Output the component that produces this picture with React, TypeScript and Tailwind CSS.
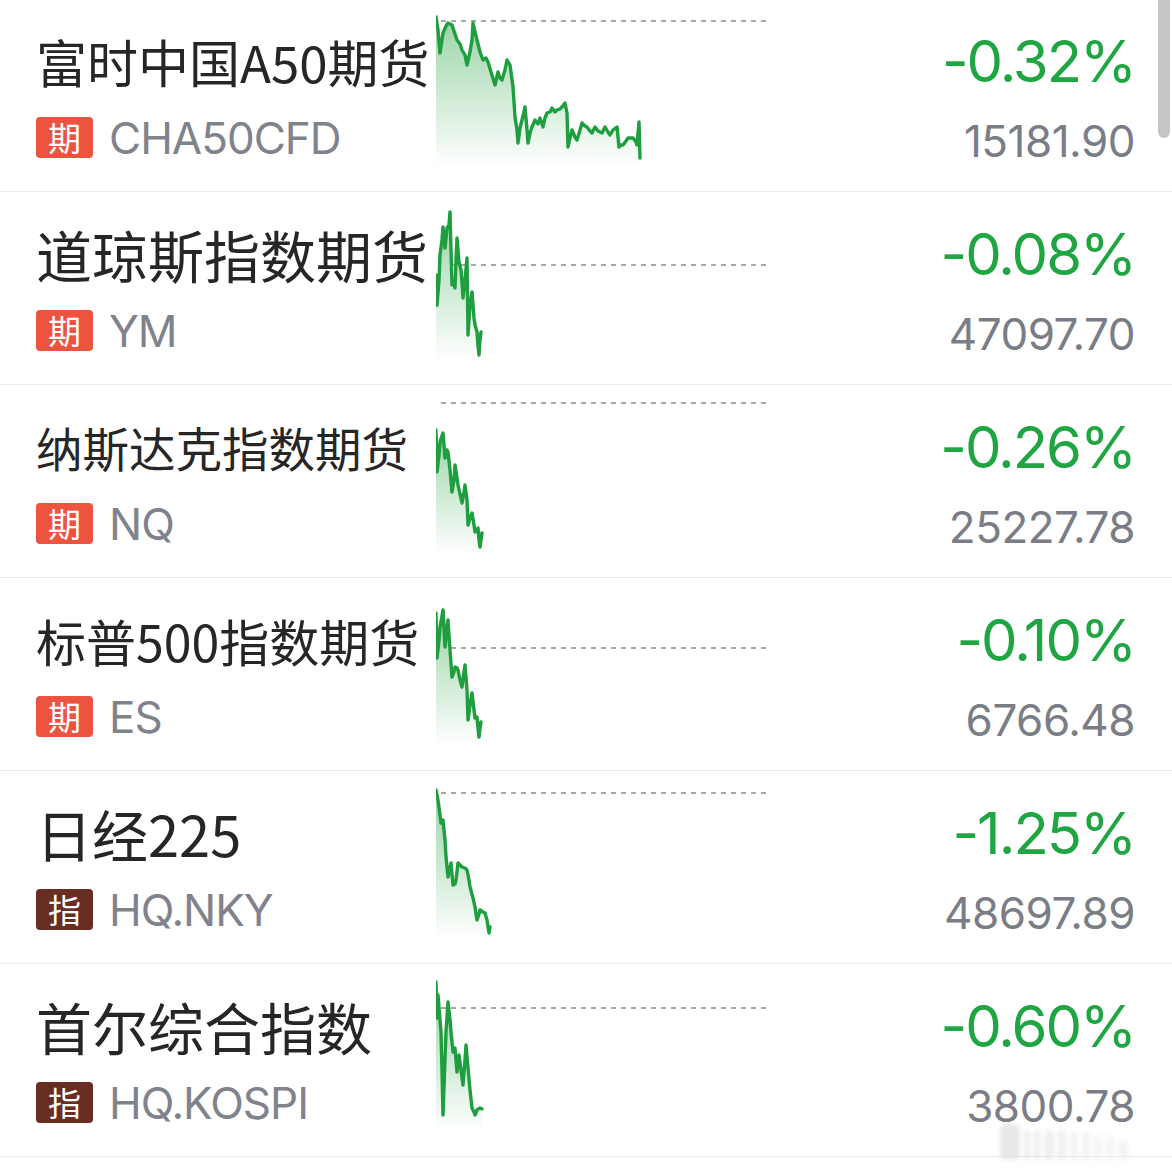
import React from "react";

type Row = {
  name: string;
  nameCls: string;
  badge: string;
  badgeCls: string;
  code: string;
  pct: string;
  price: string;
  dash: number;
  pts: number[][];
};

const rows: Row[] = [
  {
    name: "富时中国A50期货",
    nameCls: "text-[51px]",
    badge: "期",
    badgeCls: "bg-[#ec5440]",
    code: "CHA50CFD",
    pct: "-0.32%",
    price: "15181.90",
    dash: 21,
    pts: [[436,17],[438,30],[440,53],[443,33],[446,26],[448,23],[452,25],[455,34],[457,40],[460,44],[462,50],[465,55],[467,65],[470,52],[472,40],[473,23],[475,32],[477,40],[480,52],[483,60],[486,58],[488,62],[491,72],[495,85],[498,72],[500,78],[502,80],[505,70],[507,60],[510,65],[513,87],[515,117],[517,130],[518,143],[520,128],[522,120],[524,112],[525,107],[527,130],[528,143],[530,133],[532,127],[535,120],[538,124],[540,118],[543,127],[545,118],[547,113],[550,112],[552,108],[555,112],[557,110],[560,109],[562,107],[565,103],[567,113],[568,147],[570,138],[572,130],[575,137],[577,140],[580,130],[582,123],[585,126],[587,127],[590,131],[592,133],[595,127],[598,131],[602,133],[605,127],[608,132],[610,135],[613,130],[617,127],[619,147],[621,145],[623,145],[626,141],[628,138],[633,138],[636,142],[637,145],[639,122],[640,158]],
  },
  {
    name: "道琼斯指数期货",
    nameCls: "text-[56px]",
    badge: "期",
    badgeCls: "bg-[#ec5440]",
    code: "YM",
    pct: "-0.08%",
    price: "47097.70",
    dash: 265,
    pts: [[436,275],[437,305],[439,280],[440,255],[442,240],[443,227],[445,248],[447,228],[449,225],[450,212],[451,250],[452,285],[454,282],[455,288],[456,260],[457,238],[459,262],[461,270],[462,282],[463,298],[465,280],[467,258],[468,335],[470,305],[472,292],[474,318],[475,325],[477,332],[478,345],[479,355],[480,340],[481,332]],
  },
  {
    name: "纳斯达克指数期货",
    nameCls: "text-[46.5px]",
    badge: "期",
    badgeCls: "bg-[#ec5440]",
    code: "NQ",
    pct: "-0.26%",
    price: "25227.78",
    dash: 403,
    pts: [[436,430],[437,472],[439,455],[440,442],[443,433],[445,458],[447,450],[448,452],[450,470],[452,492],[454,480],[455,465],[457,478],[458,485],[460,494],[462,503],[464,492],[465,485],[467,500],[468,525],[470,518],[472,513],[474,525],[475,532],[477,530],[478,528],[479,540],[480,547],[481,540],[482,533]],
  },
  {
    name: "标普500指数期货",
    nameCls: "text-[50px]",
    badge: "期",
    badgeCls: "bg-[#ec5440]",
    code: "ES",
    pct: "-0.10%",
    price: "6766.48",
    dash: 648,
    pts: [[436,613],[437,658],[439,640],[440,627],[442,616],[443,610],[445,647],[447,628],[448,620],[450,650],[452,677],[454,672],[455,667],[457,668],[458,670],[460,680],[462,687],[464,672],[465,665],[467,690],[468,720],[470,705],[472,693],[474,710],[475,718],[477,717],[478,728],[479,737],[480,728],[481,722]],
  },
  {
    name: "日经225",
    nameCls: "text-[56px]",
    badge: "指",
    badgeCls: "bg-[#6a2d22]",
    code: "HQ.NKY",
    pct: "-1.25%",
    price: "48697.89",
    dash: 793,
    pts: [[436,790],[438,800],[440,815],[441,823],[443,820],[445,840],[446,857],[448,877],[450,868],[451,863],[453,885],[455,884],[456,880],[458,863],[460,865],[462,867],[465,868],[467,870],[469,880],[470,887],[473,898],[475,907],[477,920],[479,914],[480,910],[483,912],[485,913],[487,920],[489,933],[490,927]],
  },
  {
    name: "首尔综合指数",
    nameCls: "text-[56px]",
    badge: "指",
    badgeCls: "bg-[#6a2d22]",
    code: "HQ.KOSPI",
    pct: "-0.60%",
    price: "3800.78",
    dash: 1008,
    pts: [[436,982],[437,1018],[438,995],[440,1020],[441,1032],[442,1070],[443,1115],[445,1060],[446,1032],[448,1002],[450,1020],[451,1032],[453,1052],[455,1048],[457,1072],[459,1055],[461,1070],[462,1078],[463,1085],[465,1060],[466,1045],[468,1068],[470,1090],[472,1108],[474,1112],[475,1115],[477,1110],[478,1109],[480,1108],[482,1109]],
  },
];

function Chart({ row, top, idx }: { row: Row; top: number; idx: number }) {
  const P = row.pts.map(([x, y]) => [x - 436, y - top]);
  const bottom = 168;
  const line = P.map(([x, y], i) => `${i === 0 ? "M" : "L"}${x},${y}`).join(" ");
  const area = `${line} L${P[P.length - 1][0]},${bottom} L${P[0][0]},${bottom} Z`;
  const dy = row.dash - top;
  const gid = `g${idx}`;
  return (
    <svg width={330} height={192} className="shrink-0 block" viewBox="0 0 330 192">
      <defs>
        <linearGradient id={gid} x1="0" y1="0" x2="0" y2="1">
          <stop offset="0%" stopColor="#98d3a5" />
          <stop offset="100%" stopColor="#ffffff" />
        </linearGradient>
      </defs>
      <line x1={5} y1={dy} x2={330} y2={dy} stroke="#a9a9a9" strokeWidth={1.8} strokeDasharray="5 5" />
      <path d={area} fill={`url(#${gid})`} />
      <path d={line} fill="none" stroke="#1f9e3f" strokeWidth={3.4} strokeLinejoin="round" strokeLinecap="round" />
    </svg>
  );
}

export default function App() {
  return (
    <div
      className="relative w-[1172px] h-[1172px] overflow-hidden bg-white"
      style={{ fontFamily: '"Inter", "Noto Sans CJK SC", sans-serif' }}
    >
      <div className="-mt-px flex flex-col">
        {rows.map((r, i) => (
          <div key={i} className="h-[193px] box-border border-b border-[#ebebeb] flex">
            <div className="w-[436px] shrink-0 pl-[36px] pt-[12px] flex flex-col">
              <div
                className={`h-[100px] flex items-center whitespace-nowrap text-[#262626] leading-none ${r.nameCls}`}
                style={{ fontFamily: '"Noto Sans CJK SC", sans-serif' }}
              >
                {r.name}
              </div>
              <div className="mt-[6px] h-[41px] flex items-center">
                <div
                  className={`w-[57px] h-[41px] rounded-[4px] flex items-center justify-center text-white text-[33px] leading-none ${r.badgeCls}`}
                  style={{ fontFamily: '"Noto Sans CJK SC", sans-serif' }}
                >
                  {r.badge}
                </div>
                <div className="ml-[16px] text-[44px] tracking-[-1px] leading-none text-[#80838b] whitespace-nowrap">
                  {r.code}
                </div>
              </div>
            </div>
            <Chart row={r} top={-1 + 193 * i} idx={i} />
            <div className="flex-1 pr-[37px] pt-[12px] flex flex-col items-end">
              <div className="h-[100px] flex items-center text-[58px] tracking-[-2px] leading-none text-[#1fa542] whitespace-nowrap">
                {r.pct}
              </div>
              <div className="h-[60px] flex items-center text-[44px] tracking-[-0.5px] leading-none text-[#7a7d85] whitespace-nowrap">
                {r.price}
              </div>
            </div>
          </div>
        ))}
      </div>
      <div className="absolute right-[2px] top-0 w-[12px] h-[138px] rounded-b-full rounded-t-[6px] bg-[#c6c6c6]" />
      <div className="absolute left-[1000px] top-[1124px] flex items-end gap-[4px] blur-[2px] opacity-60">
        <div className="w-[20px] h-[36px] rounded-[6px] bg-[#d9d9d9]" />
        <div className="w-[6px] h-[30px] bg-[#e3e3e3]" />
        <div className="w-[6px] h-[30px] bg-[#e3e3e3]" />
        <div className="w-[10px] h-[30px] bg-[#e6e6e6]" />
        <div className="w-[8px] h-[30px] bg-[#e6e6e6]" />
        <div className="w-[8px] h-[28px] bg-[#ebebeb]" />
        <div className="w-[8px] h-[28px] bg-[#ebebeb]" />
        <div className="w-[8px] h-[24px] bg-[#eeeeee]" />
        <div className="w-[8px] h-[24px] bg-[#eeeeee]" />
        <div className="w-[10px] h-[20px] bg-[#eeeeee]" />
      </div>
    </div>
  );
}
